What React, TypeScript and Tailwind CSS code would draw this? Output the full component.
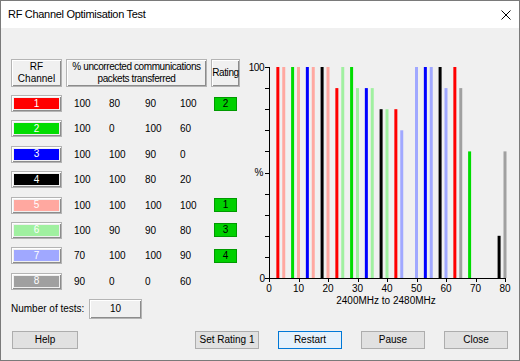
import React from 'react';

type Channel = { n: number; color: string; vals: number[]; rating?: number };

const channels: Channel[] = [
  { n: 1, color: '#ff0000', vals: [100, 80, 90, 100], rating: 2 },
  { n: 2, color: '#00dc00', vals: [100, 0, 100, 60] },
  { n: 3, color: '#0000ff', vals: [100, 100, 90, 0] },
  { n: 4, color: '#000000', vals: [100, 100, 80, 20] },
  { n: 5, color: '#ffa8a0', vals: [100, 100, 100, 100], rating: 1 },
  { n: 6, color: '#a0f0a0', vals: [100, 90, 90, 80], rating: 3 },
  { n: 7, color: '#a0a8ff', vals: [70, 100, 100, 90], rating: 4 },
  { n: 8, color: '#a0a0a0', vals: [90, 0, 0, 60] },
];

const colorOf = (n: number) => channels[n - 1].color;

// [frequency, rf channel, % value]
const bars: [number, number, number][] = [
  [3, 1, 100], [5, 5, 100], [8, 2, 100], [10, 5, 100], [13, 3, 100], [15, 5, 100],
  [18, 4, 100], [20, 5, 100], [23, 1, 90], [25, 6, 100], [28, 2, 100], [30, 6, 90],
  [33, 3, 90], [35, 6, 90], [38, 4, 80], [40, 6, 80], [43, 1, 80], [45, 7, 70],
  [50, 7, 100], [53, 3, 100], [55, 7, 100], [58, 4, 100], [60, 7, 90], [63, 1, 100],
  [65, 8, 90], [68, 2, 60], [78, 4, 20], [80, 8, 60],
];

const xOf = (c: number) => 20 + c * 2.95;
const yOf = (v: number) => 223 - v * 2.11;

const colWidths = ['w-[35px]', 'w-[36px]', 'w-[35px]', 'w-[34px]'];

const raised =
  'border border-[#b4b4b4] bg-[#f0f0f0] shadow-[inset_1px_1px_0_#ffffff,inset_-1px_-1px_0_#8c8c8c]';

const Chart: React.FC = () => (
  <svg width={266} height={252} className="ml-[4px] shrink-0" fontFamily="'Liberation Sans', Arial, sans-serif" fontSize={10}>
    <g transform="translate(4,0)">
      {bars.map(([c, ch, v]) => (
        <rect key={c} x={xOf(c) - 1.5} y={yOf(v)} width={3} height={223 - yOf(v)} fill={colorOf(ch)} />
      ))}
      <line x1={20.5} y1={12} x2={20.5} y2={223} stroke="#000" />
      <line x1={20} y1={223.5} x2={257} y2={223.5} stroke="#000" />
      {Array.from({ length: 11 }, (_, k) => (
        <line key={k} x1={16} x2={20} y1={Math.round(yOf(k * 10)) + 0.5} y2={Math.round(yOf(k * 10)) + 0.5} stroke="#000" />
      ))}
      {Array.from({ length: 9 }, (_, k) => (
        <g key={k}>
          <line x1={Math.round(xOf(k * 10)) + 0.5} x2={Math.round(xOf(k * 10)) + 0.5} y1={223} y2={227} stroke="#000" />
          <text x={xOf(k * 10)} y={237} textAnchor="middle" fill="#000">{k * 10}</text>
        </g>
      ))}
      <text x={15} y={16} textAnchor="end" fill="#000" letterSpacing={-0.5}>100</text>
      <text x={10} y={121} textAnchor="middle" fill="#000">%</text>
      <text x={16} y={227} textAnchor="end" fill="#000">0</text>
      <text x={137} y={249} textAnchor="middle" fill="#000">2400MHz to 2480MHz</text>
    </g>
  </svg>
);

const BottomButton: React.FC<{ label: string; primary?: boolean }> = ({ label, primary }) => (
  <button
    className={`h-[18px] w-[64px] border text-[10px] text-black leading-none ${
      primary ? 'bg-[#e5f1fb] border-[#0078d7]' : 'bg-[#e1e1e1] border-[#adadad]'
    }`}
  >
    {label}
  </button>
);

export default function App() {
  return (
    <div
      className="w-[520px] h-[361px] border border-[#7a7a7a] bg-[#f0f0f0] flex flex-col text-black overflow-hidden"
      style={{ fontFamily: "'Liberation Sans', Arial, sans-serif" }}
    >
      {/* Title bar */}
      <div className="h-[27px] bg-white flex items-center justify-between pl-[7px] pr-[8px] shrink-0">
        <span className="text-[11px] tracking-[-0.3px]">RF Channel Optimisation Test</span>
        <svg width={10} height={10} viewBox="0 0 10 10">
          <path d="M0.5 0.5 L9.5 9.5 M9.5 0.5 L0.5 9.5" stroke="#000" strokeWidth={1} />
        </svg>
      </div>

      {/* Body */}
      <div className="flex pt-[27px] pl-[10px] text-[10px]">
        <div className="flex flex-col pt-[4px] w-[230px] shrink-0">
          {/* Header */}
          <div className="flex h-[28px] leading-[12px] text-center">
            <div className={`${raised} w-[51px] flex items-center justify-center`}>RF<br />Channel</div>
            <div className={`${raised} w-[141px] ml-[4px] flex items-center justify-center whitespace-nowrap tracking-[-0.4px]`}>
              % uncorrected communications<br />packets transferred
            </div>
            <div className={`${raised} w-[29px] ml-[4px] flex items-center justify-center tracking-[-0.4px]`}>Rating</div>
          </div>

          {/* Rows */}
          <div className="flex flex-col gap-[8.4px] mt-[8px]">
            {channels.map((c) => (
              <div key={c.n} className="flex items-center h-[17px]">
                <div className={`${raised} w-[51px] h-[17px] p-[2px] flex`}>
                  <div
                    className="flex-1 flex items-center justify-center text-white leading-none"
                    style={{ backgroundColor: c.color }}
                  >
                    {c.n}
                  </div>
                </div>
                <div className="flex ml-[12px]">
                  {c.vals.map((v, i) => (
                    <span key={i} className={colWidths[i]}>{v}</span>
                  ))}
                </div>
                {c.rating && (
                  <div className="w-[23px] h-[14px] bg-[#00d000] border border-[#009a00] flex items-center justify-center leading-none">
                    {c.rating}
                  </div>
                )}
              </div>
            ))}
          </div>

          {/* Number of tests */}
          <div className="flex items-center mt-[9px] h-[20px]">
            <span className="w-[78px]">Number of tests:</span>
            <div className={`${raised} w-[53px] h-[20px] flex items-center justify-center`}>10</div>
          </div>
        </div>

        <Chart />
      </div>

      {/* Buttons */}
      <div className="flex items-center mt-[12px] pl-[11px] pr-[11px]">
        <button className="h-[18px] w-[66px] border border-[#adadad] bg-[#e1e1e1] text-[10px] leading-none">Help</button>
        <div className="flex-1" />
        <div className="flex gap-[19px]">
          <BottomButton label="Set Rating 1" />
          <BottomButton label="Restart" primary />
          <BottomButton label="Pause" />
          <BottomButton label="Close" />
        </div>
      </div>
    </div>
  );
}
